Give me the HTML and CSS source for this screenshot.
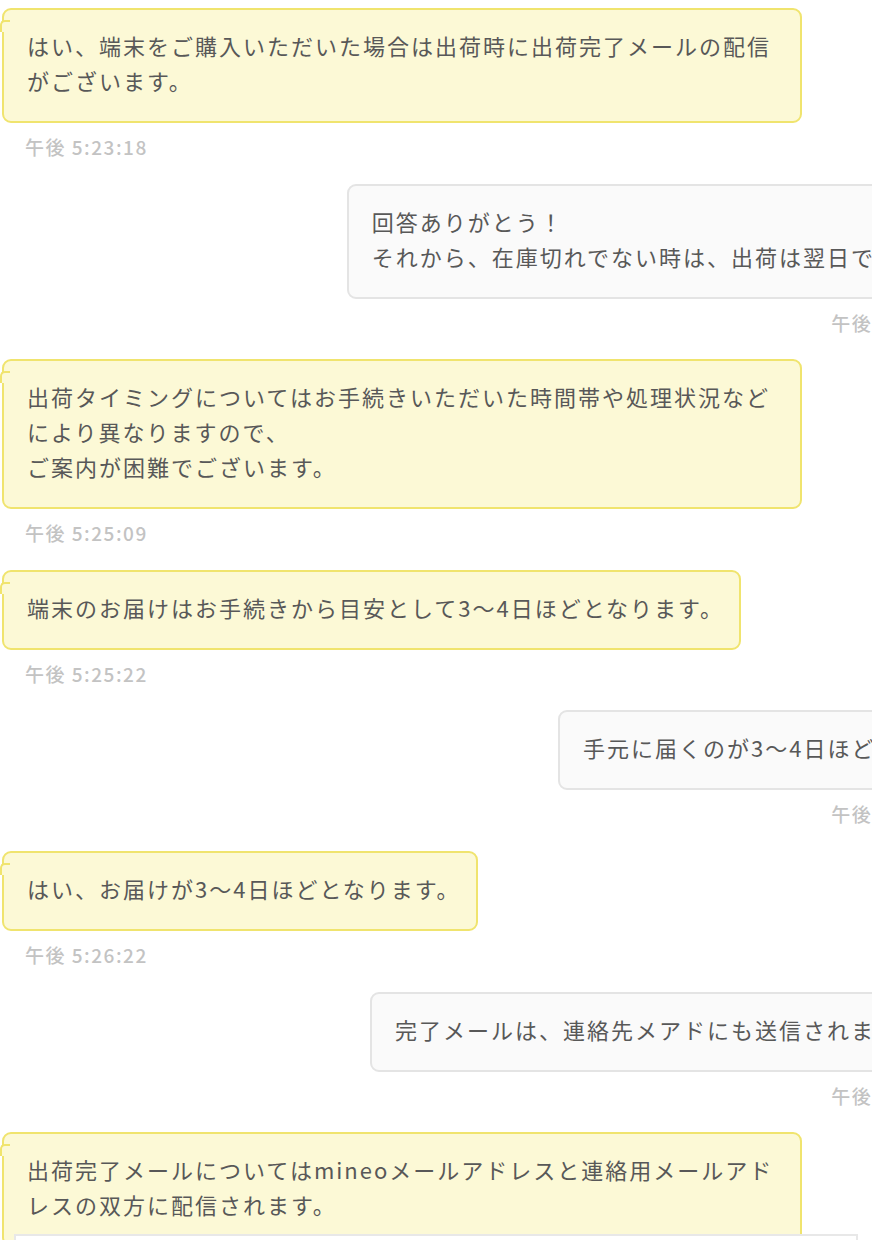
FILE: index.html
```html
<!DOCTYPE html>
<html lang="ja">
<head>
<meta charset="utf-8">
<title>チャット</title>
<link rel="stylesheet" href="styles.css">
</head>
<body>
<div class="chat">
  <div class="msg msg--op">
    <div class="bubble">はい、端末をご購入いただいた場合は出荷時に出荷完了メールの配信がございます。</div>
    <div class="time">午後 5:23:18</div>
  </div>
  <div class="msg msg--me">
    <div class="bubble">回答ありがとう！<br>それから、在庫切れでない時は、出荷は翌日ですか？</div>
    <div class="time">午後 5:24:51</div>
  </div>
  <div class="msg msg--op">
    <div class="bubble">出荷タイミングについてはお手続きいただいた時間帯や処理状況などにより異なりますので、<br>ご案内が困難でございます。</div>
    <div class="time">午後 5:25:09</div>
  </div>
  <div class="msg msg--op">
    <div class="bubble">端末のお届けはお手続きから目安として3〜4日ほどとなります。</div>
    <div class="time">午後 5:25:22</div>
  </div>
  <div class="msg msg--me">
    <div class="bubble">手元に届くのが3〜4日ほどですね</div>
    <div class="time">午後 5:26:03</div>
  </div>
  <div class="msg msg--op">
    <div class="bubble">はい、お届けが3〜4日ほどとなります。</div>
    <div class="time">午後 5:26:22</div>
  </div>
  <div class="msg msg--me">
    <div class="bubble">完了メールは、連絡先メアドにも送信されますか？</div>
    <div class="time">午後 5:27:14</div>
  </div>
  <div class="msg msg--op">
    <div class="bubble">出荷完了メールについてはmineoメールアドレスと連絡用メールアドレスの双方に配信されます。</div>
    <div class="time">午後 5:27:40</div>
  </div>
</div>
<div class="composer"></div>
</body>
</html>
```

FILE: styles.css
```css
html, body {
  margin: 0;
  padding: 0;
  overflow: hidden;
  background: #ffffff;
}

body {
  font-family: "Noto Sans CJK JP", "Noto Sans", sans-serif;
  color: #585858;
}

.chat {
  width: 969px;
  margin-left: 2px;
  padding-top: 8px;
  display: flex;
  flex-direction: column;
}

.msg {
  display: flex;
  flex-direction: column;
  margin-bottom: 23.6px;
}

.msg--op { align-items: flex-start; }
.msg--me { align-items: flex-end; }

.bubble {
  position: relative;
  box-sizing: border-box;
  max-width: 800px;
  font-size: 22px;
  line-height: 35px;
  letter-spacing: 2px;
  padding: 18px 15px 23px 23px;
  border-radius: 9px;
  line-break: strict;
}

.msg--op .bubble {
  background: #fcf9d6;
  border: 2px solid #f0e46e;
}

.msg--op .bubble::before {
  content: "";
  position: absolute;
  left: -4px;
  top: 10px;
  width: 8px;
  height: 10px;
  background: #fcf9d6;
  border-left: 2px solid #f0e46e;
  border-top: 2px solid #f0e46e;
  border-radius: 5px 0 0 0;
}

.msg--me .bubble {
  max-width: none;
  white-space: nowrap;
  padding-right: 22px;
  background: #fafafa;
  border: 2px solid #e4e4e4;
}

.time {
  margin-top: 11px;
  font-size: 19px;
  font-weight: 500;
  line-height: 26px;
  letter-spacing: 1.5px;
  color: #c3c3c3;
}

.msg--op .time { padding-left: 23px; }
.msg--me .time { padding-right: 17px; }

.composer {
  position: fixed;
  left: 14px;
  top: 1234px;
  width: 840px;
  height: 40px;
  background: #ffffff;
  border: 2px solid #e8e8e8;
}
```
